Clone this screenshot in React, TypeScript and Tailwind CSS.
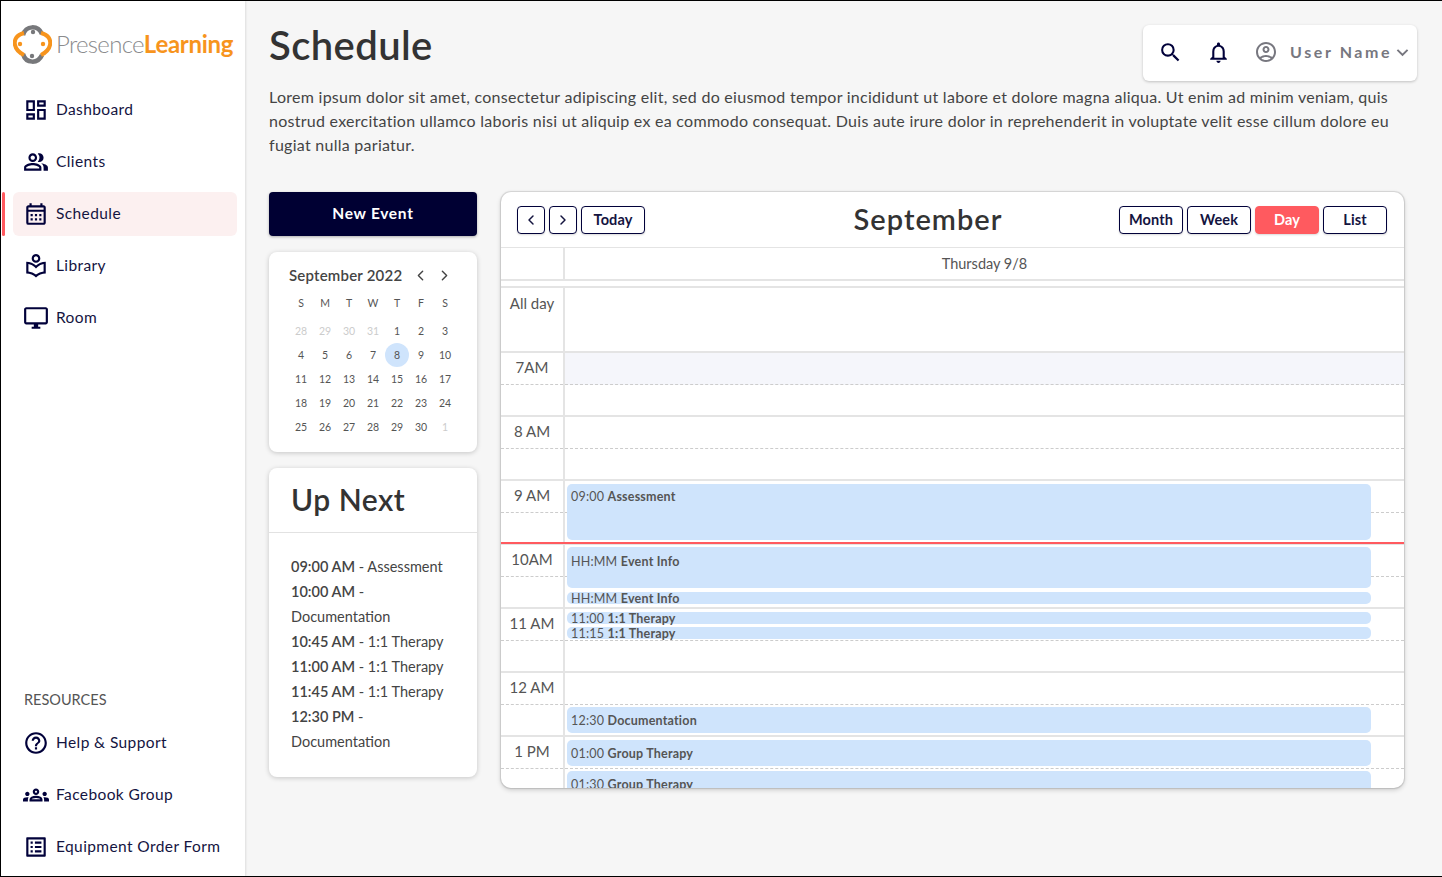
import {
  MdOutlineDashboard,
  MdOutlinePeopleAlt,
  MdOutlineCalendarMonth,
  MdOutlineLocalLibrary,
  MdOutlineDesktopWindows,
  MdOutlineHelpOutline,
  MdOutlineGroups,
  MdOutlineListAlt,
  MdSearch,
  MdOutlineNotifications,
  MdOutlineAccountCircle,
  MdKeyboardArrowDown,
} from 'react-icons/md'
import { ChevronLeft, ChevronRight } from 'lucide-react'

const font = 'font-["Lato","Noto_Sans",sans-serif]'

const nav = [
  { label: 'Dashboard', icon: MdOutlineDashboard },
  { label: 'Clients', icon: MdOutlinePeopleAlt },
  { label: 'Schedule', icon: MdOutlineCalendarMonth, active: true },
  { label: 'Library', icon: MdOutlineLocalLibrary },
  { label: 'Room', icon: MdOutlineDesktopWindows },
]

const resources = [
  { label: 'Help & Support', icon: MdOutlineHelpOutline },
  { label: 'Facebook Group', icon: MdOutlineGroups },
  { label: 'Equipment Order Form', icon: MdOutlineListAlt },
]

const weeks = [
  ['28', '29', '30', '31', '1', '2', '3'],
  ['4', '5', '6', '7', '8', '9', '10'],
  ['11', '12', '13', '14', '15', '16', '17'],
  ['18', '19', '20', '21', '22', '23', '24'],
  ['25', '26', '27', '28', '29', '30', '1'],
]

const upNext = [
  ['09:00 AM', ' - Assessment'],
  ['10:00 AM', ' -'],
  ['', 'Documentation'],
  ['10:45 AM', ' - 1:1 Therapy'],
  ['11:00 AM', ' - 1:1 Therapy'],
  ['11:45 AM', ' - 1:1 Therapy'],
  ['12:30 PM', ' -'],
  ['', 'Documentation'],
]

const hours = ['7AM', '8 AM', '9 AM', '10AM', '11 AM', '12 AM', '1 PM']

// top is relative to the 7AM row, the grid is a free canvas for events
const events = [
  { top: 131, h: 56, time: '09:00', name: 'Assessment', pad: 'pt-[7px]' },
  { top: 194, h: 41, time: 'HH:MM', name: 'Event Info', pad: 'pt-[9px]' },
  { top: 239, h: 12, time: 'HH:MM', name: 'Event Info', pad: 'pt-[1px]' },
  { top: 259, h: 12, time: '11:00', name: '1:1 Therapy', pad: 'pt-[1px]' },
  { top: 274, h: 12, time: '11:15', name: '1:1 Therapy', pad: 'pt-[1px]' },
  { top: 354, h: 26, time: '12:30', name: 'Documentation', pad: 'pt-[8px]' },
  { top: 387, h: 26, time: '01:00', name: 'Group Therapy', pad: 'pt-[8px]' },
  { top: 418, h: 26, time: '01:30', name: 'Group Therapy', pad: 'pt-[8px]' },
]

function Logo() {
  return (
    <svg width="39" height="39" viewBox="0 0 39 39" fill="none" className="shrink-0">
      <path d="M10 10C13 0 25 0 29 9" stroke="#77787b" strokeWidth="4.5" />
      <path d="M10 29C13 39 25 39 29 30" stroke="#77787b" strokeWidth="4.5" />
      <path d="M11 8C3 10 1 15 2 20C3 25 7 28 11 30" stroke="#f7941d" strokeWidth="4" />
      <path d="M28 8C36 10 38 15 37 20C36 25 32 28 28 30" stroke="#f7941d" strokeWidth="4" />
      <circle cx="20" cy="7" r="2.2" fill="#77787b" />
      <circle cx="19" cy="31" r="2.2" fill="#77787b" />
      <circle cx="7" cy="19" r="2.2" fill="#f7941d" />
      <circle cx="30" cy="19" r="2.2" fill="#f7941d" />
    </svg>
  )
}

function NavItem({ label, icon: Icon, active }: { label: string; icon: typeof MdSearch; active?: boolean }) {
  return (
    <div className="relative h-[44px] mb-2 ml-[12px] mr-2">
      {active && <div className="absolute -left-[11px] top-0 h-[44px] w-[3px] rounded-sm bg-[#ff5a5f]" />}
      <div className={`flex items-center h-full rounded-md ${active ? 'bg-[#fcf0f0]' : ''}`}>
        <Icon size={26} className="ml-[10px] shrink-0 text-[#01013a]" />
        <span className="ml-[7px] text-[15.5px] tracking-[0.4px] text-[#14143f]">{label}</span>
      </div>
    </div>
  )
}

function MiniCalendar() {
  return (
    <div className="mt-4 h-[200px] rounded-lg bg-white pt-[13px] shadow-[0_1px_5px_rgba(0,0,0,0.2)]">
      <div className="flex items-center h-5 pl-5">
        <span className="w-[122px] text-[15px] font-semibold tracking-[0.2px] text-[#444] whitespace-nowrap">September 2022</span>
        <ChevronLeft size={17} className="ml-[1px] text-[#444]" />
        <ChevronRight size={17} className="ml-[7px] text-[#444]" />
      </div>
      <div className="mt-[8px] grid grid-cols-7 w-[168px] ml-5 text-center text-[10.5px] text-[#555]">
        {['S', 'M', 'T', 'W', 'T', 'F', 'S'].map((d, i) => (
          <div key={i} className="h-5 leading-[20px]">{d}</div>
        ))}
      </div>
      <div className="mt-[6px] w-[168px] ml-5">
        {weeks.map((w, i) => (
          <div key={i} className="grid grid-cols-7 h-6 text-center text-[10.5px] leading-[24px] text-[#555]">
            {w.map((d, j) => {
              const muted = (i === 0 && j < 4) || (i === 4 && j === 6)
              const today = i === 1 && j === 4
              return (
                <div key={j} className={`${muted ? 'text-[#ccc]' : ''} ${today ? 'rounded-full bg-[#cfe4fc]' : ''}`}>{d}</div>
              )
            })}
          </div>
        ))}
      </div>
    </div>
  )
}

function UpNext() {
  return (
    <div className="mt-4 h-[309px] rounded-lg bg-white shadow-[0_1px_5px_rgba(0,0,0,0.2)]">
      <div className="h-[65px] border-b border-[#e2e2e2] pl-[22px] pt-[9px] text-[30px] font-semibold tracking-[0.5px] text-[#333]">Up Next</div>
      <div className="pl-[22px] pt-[21px] text-[14.5px] leading-[25px] text-[#444]">
        {upNext.map(([t, r], i) => (
          <div key={i} className="whitespace-pre">
            <span className="font-semibold">{t}</span>
            {r}
          </div>
        ))}
      </div>
    </div>
  )
}

function ToolButton({ children, className = '' }: { children: React.ReactNode; className?: string }) {
  return (
    <div className={`flex h-7 items-center justify-center rounded border border-[#01013a] bg-white text-[14.5px] font-bold tracking-[0.1px] text-[#14143f] shadow-[0_1px_2px_rgba(0,0,0,0.15)] ${className}`}>
      {children}
    </div>
  )
}

function CalendarPanel() {
  return (
    <div className="flex h-[596px] w-[903px] flex-col overflow-hidden rounded-[10px] bg-white shadow-[0_0_1px_1px_rgba(0,0,0,0.12),0_2px_5px_rgba(0,0,0,0.18)]">
      <div className="flex h-[56px] shrink-0 items-center border-b border-[#e4e4e4] pl-4 pr-[17px] pt-[1px]">
        <div className="flex w-[300px] gap-1">
          <ToolButton className="w-7"><ChevronLeft size={16} strokeWidth={2.2} /></ToolButton>
          <ToolButton className="w-7"><ChevronRight size={16} strokeWidth={2.2} /></ToolButton>
          <ToolButton className="w-16">Today</ToolButton>
        </div>
        <div className="ml-[1px] w-[220px] pb-[2px] text-center text-[29px] font-semibold tracking-[1px] text-[#333]">September</div>
        <div className="ml-auto flex gap-1">
          <ToolButton className="w-16">Month</ToolButton>
          <ToolButton className="w-16">Week</ToolButton>
          <ToolButton className="w-16 border-[#ff5a5f] !bg-[#ff5a5f] !text-white">Day</ToolButton>
          <ToolButton className="w-16">List</ToolButton>
        </div>
      </div>
      <div className="flex h-[33px] shrink-0 border-b-2 border-[#e4e4e4]">
        <div className="w-[64px] shrink-0 border-r-2 border-[#e4e4e4]" />
        <div className="flex-1 pt-[5px] text-center text-[14.5px] text-[#555]">Thursday 9/8</div>
      </div>
      <div className="h-[7px] shrink-0 border-b-2 border-[#e4e4e4]" />
      <div className="flex h-[65px] shrink-0 border-b-2 border-[#e4e4e4]">
        <div className="w-[64px] shrink-0 border-r-2 border-[#e4e4e4] pt-[4px] text-center text-[15px] text-[#555]">All day</div>
      </div>
      <div className="relative">
        {hours.map((h, i) => (
          <div key={h} className={`flex h-[64px] border-b-2 border-[#e4e4e4] ${i === 6 ? 'border-b-0' : ''}`}>
            <div className="w-[64px] shrink-0 border-r-2 border-[#e4e4e4]">
              <div className="h-[32px] border-b border-dashed border-[#ccc] pt-[3px] text-center text-[15px] text-[#555]">{h}</div>
            </div>
            <div className="flex-1">
              <div className={`h-[32px] border-b border-dashed border-[#ccc] ${i === 0 ? 'bg-[#f5f6fb]' : ''}`} />
            </div>
          </div>
        ))}
        {events.map((e, i) => (
          <div
            key={i}
            className={`absolute left-[66px] w-[804px] rounded-[5px] bg-[#cfe4fc] pl-1 text-[12.5px] leading-[12px] tracking-[0.2px] text-[#555] ${e.pad}`}
            style={{ top: e.top, height: e.h }}
          >
            <span className="whitespace-pre">{e.time} </span>
            <span className="font-bold">{e.name}</span>
          </div>
        ))}
        <div className="absolute left-0 right-0 top-[189px] h-[2px] bg-[#ff5a5f]" />
      </div>
    </div>
  )
}

export default function App() {
  return (
    <div className={`flex h-[877px] w-[1442px] overflow-hidden border border-r-0 border-black bg-[#f6f6f6] ${font}`}>
      <aside className="flex w-[244px] shrink-0 flex-col bg-white shadow-[1px_0_2px_rgba(0,0,0,0.1)]">
        <div className="flex h-[84px] items-center pl-[12px] pt-[3px]">
          <Logo />
          <div className="ml-[4px] flex pb-[2px]">
            <span className="text-[24px] tracking-[-0.7px] text-[#8a8b8d] font-light">Presence</span>
            <span className="text-[24px] font-bold tracking-[-0.3px] text-[#f7941d]">Learning</span>
          </div>
        </div>
        <nav className="mt-[3px]">
          {nav.map((n) => (
            <NavItem key={n.label} {...n} />
          ))}
        </nav>
        <div className="mt-auto">
          <div className="pl-[23px] text-[14.5px] text-[#555]">RESOURCES</div>
          <div className="mt-[10px] mb-[-1px]">
            {resources.map((n) => (
              <NavItem key={n.label} {...n} />
            ))}
          </div>
        </div>
      </aside>
      <main className="relative flex-1 pl-[24px]">
        <h1 className="pt-[18px] text-[40px] leading-[52px] font-semibold tracking-[0.4px] text-[#333]">Schedule</h1>
        <p className="mt-[14px] w-[1130px] text-[16px] leading-[24px] tracking-[0.27px] text-[#444]">
          Lorem ipsum dolor sit amet, consectetur adipiscing elit, sed do eiusmod tempor incididunt ut labore et dolore magna aliqua. Ut enim ad minim veniam, quis nostrud exercitation ullamco laboris nisi ut aliquip ex ea commodo consequat. Duis aute irure dolor in reprehenderit in voluptate velit esse cillum dolore eu fugiat nulla pariatur.
        </p>
        <div className="mt-[35px] flex gap-6">
          <div className="w-[208px] shrink-0">
            <div className="flex h-11 items-center justify-center rounded bg-[#000033] text-[15.5px] font-bold tracking-[0.7px] text-white shadow-[0_1px_3px_rgba(0,0,0,0.3)]">New Event</div>
            <MiniCalendar />
            <UpNext />
          </div>
          <CalendarPanel />
        </div>
        <div className="absolute right-[25px] top-[24px] flex h-[56px] w-[274px] items-center rounded-md bg-white pb-[2px] shadow-[0_1px_3px_rgba(0,0,0,0.22)]">
          <MdSearch size={25} className="ml-[15px] text-[#01013a]" />
          <MdOutlineNotifications size={25} className="ml-[23px] text-[#01013a]" />
          <MdOutlineAccountCircle size={24} className="ml-[23px] text-[#77777f]" />
          <span className="ml-[12px] text-[16px] font-bold tracking-[2.6px] text-[#77777f] whitespace-nowrap">User Name</span>
          <MdKeyboardArrowDown size={23} className="-ml-[1px] text-[#77777f]" />
        </div>
      </main>
    </div>
  )
}
